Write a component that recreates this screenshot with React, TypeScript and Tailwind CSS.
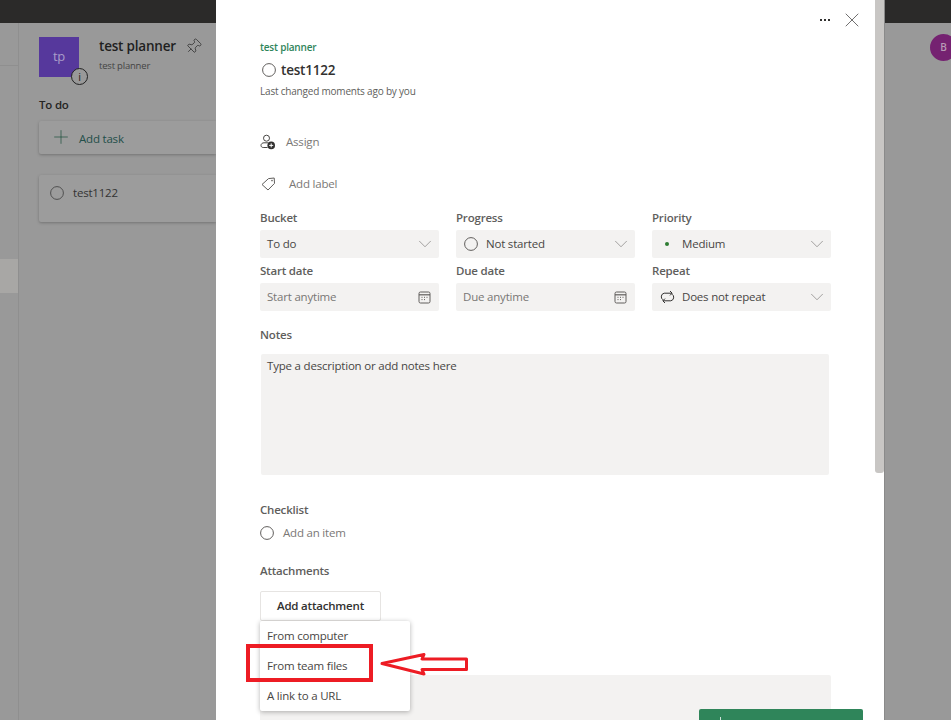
import { Pin, Plus, X, ChevronDown } from "lucide-react";

const Circle = ({ size = 14, className = "" }: { size?: number; className?: string }) => (
  <svg width={size} height={size} viewBox="0 0 14 14" className={"shrink-0 " + className} fill="none">
    <circle cx="7" cy="7" r="6.4" stroke="currentColor" strokeWidth="1" />
  </svg>
);

const CalendarIcon = () => (
  <svg width="13" height="13" viewBox="0 0 13 13" fill="none" className="shrink-0 text-[#605e5c]">
    <rect x="1" y="1" width="11" height="11" rx="1.5" stroke="currentColor" />
    <path d="M1 3.8h11" stroke="currentColor" strokeWidth="1.2" />
    <path d="M3.5 6.3h1M6 6.3h1M8.5 6.3h1M3.5 8.6h1M6 8.6h1" stroke="currentColor" />
  </svg>
);

const RepeatIcon = () => (
  <svg width="15" height="14" viewBox="0 0 15 14" fill="none" className="shrink-0 text-[#323130]">
    <path d="M3 9.8A3.6 3.6 0 0 1 4.2 3.2H12M10 1l2.2 2.2L10 5.4" stroke="currentColor" />
    <path d="M12 4.2A3.6 3.6 0 0 1 10.8 10.8H3M5 13l-2.2-2.2L5 8.6" stroke="currentColor" />
  </svg>
);

const AssignIcon = () => (
  <svg width="16" height="16" viewBox="0 0 16 16" fill="none" className="shrink-0 text-[#484644]">
    <circle cx="6.5" cy="4.2" r="3" stroke="currentColor" />
    <path d="M7.5 13.5H3.2C1.8 13.5 1 12.6 1 11.4 1 9.8 2.4 8.8 4 8.8h4.4" stroke="currentColor" />
    <circle cx="11.2" cy="11.4" r="3.8" fill="#323130" />
    <path d="M11.2 9.4v4M9.2 11.4h4" stroke="#fff" />
  </svg>
);

const TagIcon = () => (
  <svg width="15" height="14" viewBox="0 0 15 14" fill="none" className="shrink-0 text-[#605e5c]">
    <path d="M1 7.5 7.5 1.6 13.2 1l.3 5.4L7 13z" stroke="currentColor" strokeLinejoin="round" />
    <circle cx="11" cy="3.6" r="0.8" fill="currentColor" />
  </svg>
);

const Field = ({ label, children }: { label: string; children: React.ReactNode }) => (
  <div className="flex flex-col">
    <div className="h-[16px] leading-[16px] text-[11.5px] font-semibold text-[#605e5c] mb-[4px]">{label}</div>
    <div className="h-[28px] bg-[#f3f2f1] rounded-[2px] flex items-center pl-[7px] pr-[3px] text-[11.5px] text-[#484644]">
      {children}
    </div>
  </div>
);

const Chevron = () => <ChevronDown size={22} strokeWidth={0.6} className="ml-auto text-[#605e5c] shrink-0" />;

export default function App() {
  return (
    <div className="relative h-[720px] w-full overflow-hidden bg-[#999999] font-['Open_Sans',sans-serif] tracking-[-0.2px]">
      <div className="h-[23px] bg-[#2b2a29]" />

      <div className="flex h-[697px]">
        {/* rail */}
        <div className="w-[19px] shrink-0 border-r border-[#8f8f8f] flex flex-col">
          <div className="h-[43px] border-b border-[#8f8f8f]" />
          <div className="h-[193px]" />
          <div className="h-[34px] bg-[#a8a7a5]" />
        </div>

        {/* board */}
        <div className="w-[197px] shrink-0 pl-[20px] pt-[14px]">
          <div className="flex">
            <div className="relative w-[40px] h-[40px] bg-[#56389c] text-[#a99cc9] text-[13px] flex items-center justify-center">
              tp
              <div className="absolute left-[32px] top-[31px] w-[17px] h-[17px] rounded-full bg-[#999999] border-[1.5px] border-[#222] flex items-center justify-center text-[11px] leading-none text-[#222]">
                i
              </div>
            </div>
            <div className="ml-[20px] pt-[0px]">
              <div className="flex items-center h-[20px] mt-[-1px]">
                <span className="text-[13.5px] font-semibold text-[#1f1f1f] whitespace-nowrap">test planner</span>
                <Pin size={17} strokeWidth={0.9} className="ml-[9px] rotate-45 text-[#1f1f1f]" />
              </div>
              <div className="text-[9.5px] text-[#444] mt-[3px] whitespace-nowrap">test planner</div>
            </div>
          </div>
          <div className="mt-[19px] h-[18px] leading-[18px] text-[11.5px] font-semibold text-[#252423]">To do</div>
          <div className="mt-[7px] h-[33px] bg-[#9c9c9c] rounded-l-[2px] shadow-[0_1px_3px_rgba(0,0,0,0.25)] flex items-center pl-[11px]">
            <Plus size={22} strokeWidth={0.7} className="text-[#0f4a33] mt-[-2px]" />
            <span className="ml-[7px] text-[11.5px] text-[#234f4a] mt-[2px]">Add task</span>
          </div>
          <div className="mt-[21px] h-[47px] bg-[#9c9c9c] rounded-l-[2px] shadow-[0_1px_3px_rgba(0,0,0,0.25)] flex items-start pl-[11px] pt-[11px]">
            <Circle size={14} className="text-[#505050]" />
            <span className="ml-[9px] text-[11.5px] leading-[14px] text-[#333]">test1122</span>
          </div>
        </div>

        <div className="flex-1 flex justify-end pt-[11px] pr-0">
          <div className="w-[21px] h-[27px] overflow-hidden">
            <div className="w-[27px] h-[27px] rounded-full bg-[#752271] text-[#b79ab5] text-[10px] font-semibold flex items-center justify-center">
              B
            </div>
          </div>
        </div>
      </div>

      {/* task dialog */}
      <div className="absolute left-[216px] top-0 w-[668px] h-[720px] bg-white overflow-hidden shadow-[1px_0_0_#8a8a8a] pl-[44px] pr-[52px] text-[#605e5c]">
        <div className="absolute right-[0px] top-0 w-[9px] h-[473px] bg-[#c8c6c4] rounded-b-[3px]" />

        <div className="h-[39px] relative">
          <div className="absolute right-[-32px] top-[8px] flex items-center text-[#323130]">
            <span className="flex gap-[2px] mr-[10px]">
              <span className="w-[2px] h-[2px] bg-current" />
              <span className="w-[2px] h-[2px] bg-current" />
              <span className="w-[2px] h-[2px] bg-current" />
            </span>
            <X size={24} strokeWidth={0.7} />
          </div>
        </div>

        <div className="h-[16px] leading-[16px] text-[10px] font-semibold text-[#2f855a]">test planner</div>
        <div className="mt-[5px] h-[20px] flex items-center">
          <Circle size={14} className="ml-[2px] text-[#605e5c]" />
          <span className="ml-[5px] mt-[1px] text-[13.5px] font-semibold text-[#323130]">test1122</span>
        </div>
        <div className="mt-[3px] h-[16px] leading-[16px] text-[10px] text-[#605e5c]">Last changed moments ago by you</div>

        <div className="mt-[33px] h-[20px] flex items-center text-[11.5px] text-[#7a7876]">
          <AssignIcon />
          <span className="ml-[10px]">Assign</span>
        </div>
        <div className="mt-[22px] h-[20px] flex items-center text-[11.5px] text-[#7a7876]">
          <span className="ml-[1px]"><TagIcon /></span>
          <span className="ml-[13px]">Add label</span>
        </div>

        <div className="mt-[16px] grid grid-cols-[179px_179px_179px] gap-x-[17px] gap-y-[5px]">
          <Field label="Bucket">
            <span>To do</span>
            <Chevron />
          </Field>
          <Field label="Progress">
            <Circle size={14} className="ml-[1px] text-[#605e5c]" />
            <span className="ml-[8px]">Not started</span>
            <Chevron />
          </Field>
          <Field label="Priority">
            <span className="ml-[6px] w-[4px] h-[4px] rounded-full bg-[#2e7d32]" />
            <span className="ml-[13px]">Medium</span>
            <Chevron />
          </Field>
          <Field label="Start date">
            <span className="text-[#797775]">Start anytime</span>
            <span className="ml-auto mr-[5px]"><CalendarIcon /></span>
          </Field>
          <Field label="Due date">
            <span className="text-[#797775]">Due anytime</span>
            <span className="ml-auto mr-[5px]"><CalendarIcon /></span>
          </Field>
          <Field label="Repeat">
            <span className="ml-[1px]"><RepeatIcon /></span>
            <span className="ml-[7px]">Does not repeat</span>
            <Chevron />
          </Field>
        </div>

        <div className="mt-[15px] h-[16px] leading-[17px] text-[11.5px] font-semibold text-[#605e5c]">Notes</div>
        <div className="mt-[12px] ml-[1px] w-[568px] h-[121px] bg-[#f3f2f1] rounded-[2px] px-[6px] py-[4px] text-[11.5px] leading-[16px] text-[#484644]">
          Type a description or add notes here
        </div>

        <div className="mt-[26px] h-[16px] leading-[17px] text-[11.5px] font-semibold text-[#605e5c]">Checklist</div>
        <div className="mt-[6px] h-[20px] flex items-center text-[11.5px] text-[#7a7876]">
          <Circle size={14} className="text-[#605e5c]" />
          <span className="ml-[9px]">Add an item</span>
        </div>

        <div className="mt-[19px] h-[16px] leading-[17px] text-[11.5px] font-semibold text-[#605e5c]">Attachments</div>
        <div className="mt-[13px] w-[121px] h-[30px] border border-[#e6e4e2] rounded-[2px] flex items-center justify-center text-[11.5px] font-semibold text-[#323130]">
          Add attachment
        </div>
        <div className="mt-[54px] w-[571px] h-[60px] bg-[#f3f2f1] rounded-[2px]" />

        {/* attachment menu */}
        <div className="absolute left-[44px] top-[621px] w-[150px] h-[90px] bg-white rounded-[2px] shadow-[0_1px_5px_rgba(0,0,0,0.3)] text-[11.5px] text-[#484644]">
          <div className="h-[30px] flex items-center pl-[7px]">From computer</div>
          <div className="h-[30px] flex items-center pl-[7px]">From team files</div>
          <div className="h-[30px] flex items-center pl-[7px]">A link to a URL</div>
        </div>

        {/* green button */}
        <div className="absolute left-[483px] top-[709px] w-[164px] h-[20px] bg-[#2f855a] rounded-[2px] pl-[21px]">
          <div className="w-[1px] h-[3px] mt-[8px] bg-[#cfe3d8]" />
        </div>

        {/* red callout */}
        <div className="absolute left-[30px] top-[644px] w-[127px] h-[38px] border-[4px] border-[#ed1c24]" />
        <svg className="absolute left-[160px] top-[650px]" width="96" height="28" viewBox="0 0 96 28" fill="none">
          <path
            d="M6 13.5 48 4.5 46 9H90.5V19.5H46L48 24Z"
            fill="#fff"
            stroke="#ed1c24"
            strokeWidth="3"
            strokeLinejoin="round"
          />
        </svg>
      </div>
    </div>
  );
}
